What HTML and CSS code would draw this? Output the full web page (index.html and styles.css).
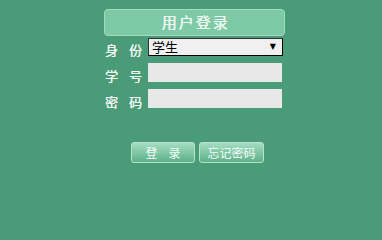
FILE: index.html
```html
<!DOCTYPE html>
<html>
<head>
<meta charset="utf-8">
<link rel="stylesheet" href="styles.css">
</head>
<body>
<div class="panel">
  <div class="title">用户登录</div>
  <div class="row row-first">
    <span class="label">身份</span>
    <div class="select"><span>学生</span><span class="arrow">▼</span></div>
  </div>
  <div class="row">
    <span class="label">学号</span>
    <div class="input"></div>
  </div>
  <div class="row">
    <span class="label">密码</span>
    <div class="input"></div>
  </div>
  <div class="buttons">
    <div class="btn btn-login"><span class="spaced">登录</span></div>
    <div class="btn btn-forgot">忘记密码</div>
  </div>
</div>
</body>
</html>
```

FILE: styles.css
```css
html, body {
  margin: 0;
  padding: 0;
  background: #4a9b78;
  height: 100%;
}
body {
  font-family: "Noto Sans CJK SC", "DejaVu Sans", sans-serif;
}
.panel {
  margin-left: 104px;
  padding-top: 9px;
  width: 181px;
  display: flex;
  flex-direction: column;
}
.title {
  box-sizing: border-box;
  height: 27px;
  width: 181px;
  border: 1px solid #a3dcc2;
  border-radius: 4px;
  background: #7ec9a6;
  color: #eef8f3;
  font-size: 15px;
  letter-spacing: 2px;
  text-indent: 2px;
  text-align: center;
  line-height: 24px;
  text-shadow: 0.4px 0 0 #eef8f3;
}
.row {
  display: flex;
  align-items: center;
  margin-top: 7px;
  height: 19px;
}
.row-first {
  margin-top: 1px;
  height: 19px;
}
.label {
  flex: 0 0 44px;
  width: 44px;
  white-space: nowrap;
  overflow: visible;
  color: #f2f7f4;
  font-size: 13px;
  letter-spacing: 11px;
  padding-left: 1px;
  box-sizing: border-box;
  line-height: 19px;
  position: relative;
  top: 3px;
  text-shadow: 0.3px 0 0 #f2f7f4;
}
.select {
  box-sizing: border-box;
  width: 135px;
  height: 18px;
  border: 1px solid #000;
  border-top-color: #333;
  border-left-color: #333;
  background: #f0f0f0;
  display: flex;
  justify-content: space-between;
  align-items: center;
  font-size: 13px;
  color: #000;
  padding: 0 6px 0 3px;
}
.arrow {
  font-size: 8px;
  font-family: "DejaVu Sans", sans-serif;
}
.input {
  width: 134px;
  height: 19px;
  background: #e8e8e8;
}
.buttons {
  display: flex;
  margin-top: 34px;
  margin-left: 27px;
  gap: 4px;
}
.btn {
  box-sizing: border-box;
  height: 21px;
  border: 1px solid #b5e3cc;
  border-radius: 3px;
  background: linear-gradient(#a6dcc2, #7cc6a3 55%, #5fae89);
  color: #f5fbf8;
  font-size: 12px;
  text-align: center;
  line-height: 19px;
}
.spaced {
  letter-spacing: 11px;
  margin-right: -11px;
}
.btn-login {
  width: 64px;
}
.btn-forgot {
  width: 65px;
}
```
